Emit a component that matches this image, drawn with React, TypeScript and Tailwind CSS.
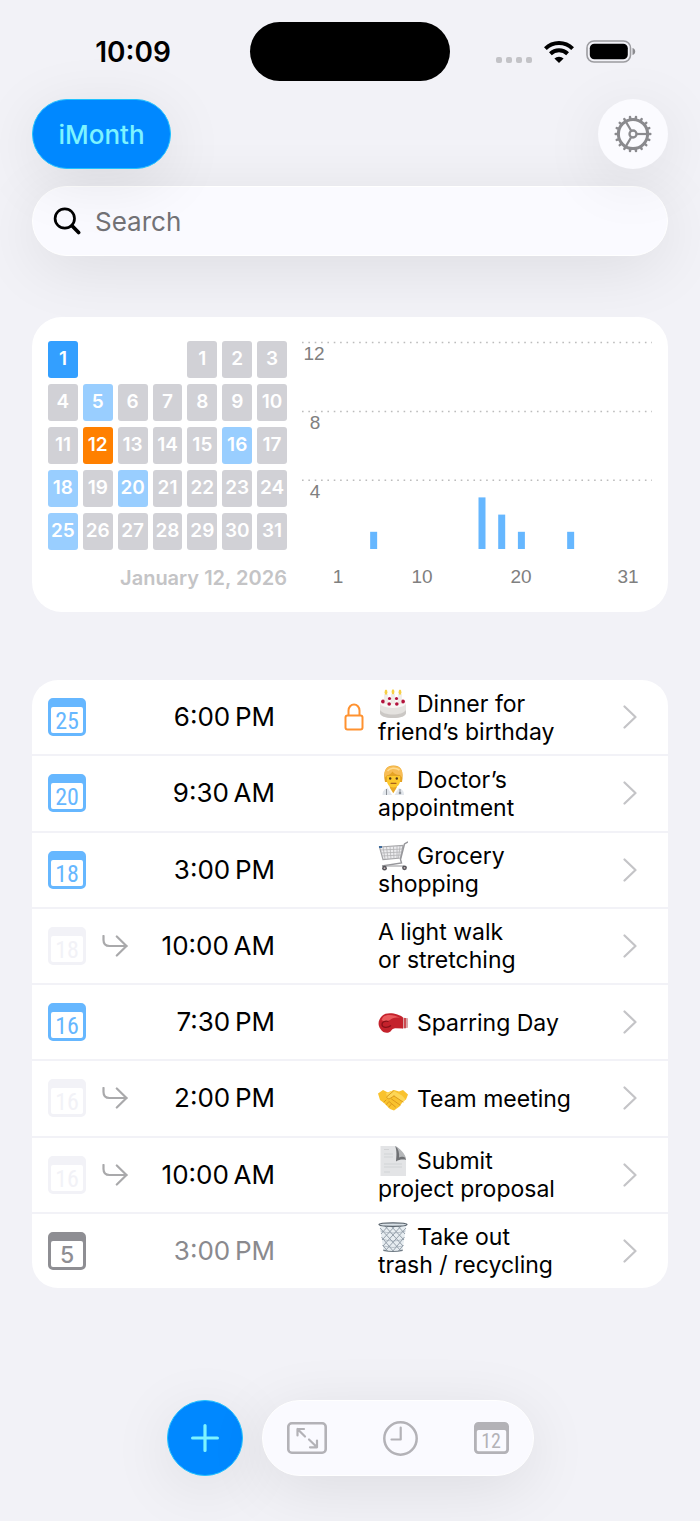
import type { ReactNode } from 'react'

// ============================================================================
// TYPES
// ============================================================================

type EmojiName = 'cake' | 'doctor' | 'cart' | 'glove' | 'handshake' | 'page' | 'basket'

type EventTone = 'upcoming' | 'repeat' | 'past'

interface CalendarEvent {
  id: number
  day: number
  time: string
  tone: EventTone
  lines: string[]
  emoji?: EmojiName
  locked?: boolean
}

// ============================================================================
// DATA
// ============================================================================

const EVENTS: CalendarEvent[] = [
  { id: 1, day: 25, time: '6:00\u202fPM', tone: 'upcoming', emoji: 'cake', lines: ['Dinner for', 'friend’s birthday'], locked: true },
  { id: 2, day: 20, time: '9:30\u202fAM', tone: 'upcoming', emoji: 'doctor', lines: ['Doctor’s', 'appointment'] },
  { id: 3, day: 18, time: '3:00\u202fPM', tone: 'upcoming', emoji: 'cart', lines: ['Grocery', 'shopping'] },
  { id: 4, day: 18, time: '10:00\u202fAM', tone: 'repeat', lines: ['A light walk', 'or stretching'] },
  { id: 5, day: 16, time: '7:30\u202fPM', tone: 'upcoming', emoji: 'glove', lines: ['Sparring Day'] },
  { id: 6, day: 16, time: '2:00\u202fPM', tone: 'repeat', emoji: 'handshake', lines: ['Team meeting'] },
  { id: 7, day: 16, time: '10:00\u202fAM', tone: 'repeat', emoji: 'page', lines: ['Submit', 'project proposal'] },
  { id: 8, day: 5, time: '3:00\u202fPM', tone: 'past', emoji: 'basket', lines: ['Take out', 'trash / recycling'] }
]

const TODAY = 12
const BUSY_DAYS = [5, 16, 18, 20, 25]
const DAYS = Array.from({ length: 31 }, (_, i) => i + 1)

const EVENT_COUNTS = [
  { day: 5, count: 1 },
  { day: 16, count: 3 },
  { day: 18, count: 2 },
  { day: 20, count: 1 },
  { day: 25, count: 1 }
]

// ============================================================================
// ICONS
// ============================================================================

function WifiIcon() {
  return (
    <svg width="30" height="22" viewBox="0 0 30 22" aria-hidden="true">
      <g fill="none" stroke="#000" strokeWidth="4">
        <path d="M1.4 7.6a19.6 19.6 0 0 1 27.2 0" />
        <path d="M6.4 12.8a12.4 12.4 0 0 1 17.2 0" />
      </g>
      <path d="M15 22l-4.6-4.5a6.6 6.6 0 0 1 9.2 0z" />
    </svg>
  )
}

function BatteryIcon() {
  return (
    <svg width="50" height="23" viewBox="0 0 50 23" aria-hidden="true">
      <rect x="1" y="1" width="43.500" height="21" rx="7" fill="none" stroke="#9c9ca0" strokeWidth="1.600" />
      <rect x="3.800" y="3.700" width="38" height="15.600" rx="4.600" fill="#000" />
      <path d="M46.500 8c1.800.4 2.700 1.900 2.700 3.500s-.9 3.100-2.700 3.500z" fill="#8c8c90" />
    </svg>
  )
}

function GearIcon() {
  const teeth = Array.from({ length: 18 }, (_, i) => i * 20)
  return (
    <svg width="38" height="38" viewBox="-19 -19 38 38" fill="none" stroke="#8a8a8e" aria-hidden="true">
      <circle r="14.600" strokeWidth="3" />
      <circle r="3.500" strokeWidth="2.300" />
      {teeth.map(a => (
        <path key={a} d="M15 0H17.300" strokeWidth="2.500" strokeLinecap="round" transform={`rotate(${a})`} />
      ))}
      {[0, 120, 240].map(a => (
        <path key={a} d="M4 0H14" strokeWidth="2.200" transform={`rotate(${a})`} />
      ))}
    </svg>
  )
}

function SearchIcon() {
  return (
    <svg width="28" height="28" viewBox="0 0 28 28" fill="none" stroke="#000" strokeLinecap="round" aria-hidden="true">
      <circle cx="11.800" cy="11.500" r="9.700" strokeWidth="2.700" />
      <path d="M19 18.800L25.600 25.500" strokeWidth="3.700" />
    </svg>
  )
}

function CalendarBadge({ day, className }: { day: number; className: string }) {
  return (
    <svg width="38" height="38" viewBox="0 0 38 38" className={`shrink-0 ${className}`} role="img" aria-label={`Day ${day}`}>
      <path
        fill="currentColor"
        fillRule="evenodd"
        d="M5 0H33a5 5 0 0 1 5 5V33a5 5 0 0 1-5 5H5a5 5 0 0 1-5-5V5a5 5 0 0 1 5-5zM5 9a2 2 0 0 0-2 2V33a2 2 0 0 0 2 2H33a2 2 0 0 0 2-2V11a2 2 0 0 0-2-2z"
      />
      {day < 10 ? (
        <text x="19" y="31" textAnchor="middle" fill="currentColor" className="font-['Inter',sans-serif] text-[23px] font-medium">
          {day}
        </text>
      ) : (
        <text
          x="19"
          y="31"
          textAnchor="middle"
          fill="currentColor"
          className="font-['Roboto_Condensed','Liberation_Sans_Narrow',Roboto,sans-serif] text-[24px] font-normal"
        >
          {day}
        </text>
      )}
    </svg>
  )
}

function RepeatArrowIcon() {
  return (
    <svg width="26" height="22" viewBox="0 0 26 22" fill="none" stroke="#a9a9ab" strokeWidth="2.200" strokeLinecap="round" strokeLinejoin="round" aria-hidden="true">
      <path d="M1.500 1V5Q1.500 11 7.500 11H24.500" />
      <path d="M14.800 1.500L24.500 11L14.800 20.500" />
    </svg>
  )
}

function LockIcon() {
  return (
    <svg width="20" height="28" viewBox="0 0 20 28" fill="none" stroke="#ff9230" strokeWidth="2" role="img" aria-label="Locked">
      <rect x="1.500" y="12.500" width="17" height="14" rx="2" />
      <path d="M4.500 12.500V7.500a5.500 6 0 0 1 11 0V12.500" />
    </svg>
  )
}

function ChevronIcon() {
  return (
    <svg width="14" height="24" viewBox="0 0 14 24" fill="none" stroke="#c4c4c7" strokeWidth="2.200" strokeLinecap="round" strokeLinejoin="round" aria-hidden="true">
      <path d="M1.500 1.500L12.500 12L1.500 22.500" />
    </svg>
  )
}

function PlusIcon() {
  return (
    <svg width="28" height="28" viewBox="0 0 28 28" stroke="#7df3ff" strokeWidth="3.200" strokeLinecap="round" aria-hidden="true">
      <path d="M14 1.600V26.400M1.600 14H26.400" />
    </svg>
  )
}

function ExpandIcon() {
  return (
    <svg width="40" height="32" viewBox="0 0 40 32" fill="none" stroke="#b3b2b7" strokeWidth="2.200" strokeLinecap="round" strokeLinejoin="round" aria-hidden="true">
      <rect x="1.300" y="1.300" width="37.400" height="29.400" rx="3.500" strokeWidth="2.600" />
      <path d="M10.500 13.500V7H17M10.500 7L18 14.500" />
      <path d="M30 18.500V25.300H23M30 25.300L22 17.500" />
    </svg>
  )
}

function ClockIcon() {
  return (
    <svg width="35" height="35" viewBox="0 0 35 35" fill="none" stroke="#b3b2b7" strokeLinecap="round" strokeLinejoin="round" aria-hidden="true">
      <circle cx="17.500" cy="17.500" r="16.200" strokeWidth="2.500" />
      <path d="M17.700 6.500V18.500H8.500" strokeWidth="2.200" />
    </svg>
  )
}

function MonthIcon() {
  return (
    <svg width="35" height="32" viewBox="0 0 35 32" aria-hidden="true">
      <path
        fill="#b3b2b7"
        fillRule="evenodd"
        d="M4.500 0H30.500a4.500 4.500 0 0 1 4.500 4.500V27.500a4.500 4.500 0 0 1-4.500 4.500H4.500A4.500 4.500 0 0 1 0 27.500V4.500A4.500 4.500 0 0 1 4.500 0zM4.600 8a1.800 1.800 0 0 0-1.800 1.800V27.400a1.800 1.800 0 0 0 1.800 1.800H30.400a1.800 1.800 0 0 0 1.800-1.800V9.800A1.800 1.800 0 0 0 30.400 8z"
      />
      <text
        x="17"
        y="26"
        textAnchor="middle"
        fill="#b3b2b7"
        className="font-['Roboto_Condensed','Liberation_Sans_Narrow',Roboto,sans-serif] text-[20px] font-normal"
      >
        12
      </text>
    </svg>
  )
}

// ============================================================================
// EMOJI
// ============================================================================

const EMOJI_ART: Record<EmojiName, ReactNode> = {
  cake: (
    <>
      <path d="M2 14v10c0 3 6 5 13 5s13-2 13-5V14z" fill="#e4e2df" />
      <path d="M2 21v3c0 3 6 5 13 5s13-2 13-5v-3c-2 3-7 4.500-13 4.500S4 24 2 21z" fill="#cbc8c5" />
      <ellipse cx="15" cy="14" rx="13" ry="5" fill="#f8f7f5" />
      <g fill="#b3123c">
        <circle cx="5" cy="12.500" r="1.900" />
        <circle cx="11.500" cy="9.500" r="1.600" />
        <circle cx="18.500" cy="9.500" r="1.600" />
        <circle cx="25" cy="12.500" r="1.900" />
      </g>
      <g stroke="#ddd3cc" strokeWidth="2.800">
        <path d="M8 5v10M15 5v10M22 5v10" />
      </g>
      <g stroke="#f7f2ee" strokeWidth="1.600">
        <path d="M8 5v10M15 5v10M22 5v10" />
      </g>
      <g fill="#f6cf45">
        <ellipse cx="8" cy="3.200" rx="1.400" ry="2.600" />
        <ellipse cx="15" cy="2.800" rx="1.400" ry="2.600" />
        <ellipse cx="22" cy="3.200" rx="1.400" ry="2.600" />
      </g>
      <g fill="#b3123c">
        <circle cx="11.200" cy="15" r="1.800" />
        <circle cx="18.800" cy="15" r="1.800" />
      </g>
    </>
  ),
  doctor: (
    <>
      <path d="M4.500 30c0-5 3-6.500 7-7.500h7.500c4 1 7 2.500 7 7.500z" fill="#e3e7ec" />
      <path d="M11.500 20.500h7.500l-.7 6-3 2.500-3.100-2.500z" fill="#e9a825" />
      <path d="M10.500 22.500l4.700 7.500M20 22.500L15.300 30" stroke="#fff" strokeWidth="2" />
      <path d="M8.500 24v6M22 24v4" stroke="#8b9097" strokeWidth="1" />
      <circle cx="22" cy="28" r="1.300" fill="#8b9097" />
      <path d="M7 17C4.500 6 8 .5 15.500.5S26 6 24 17z" fill="#e5a324" />
      <path d="M8.800 11h13.400v4c0 4.500-3 7.500-6.700 7.500S8.800 19.500 8.800 15z" fill="#fdc92f" />
      <path d="M7 12.500C5.500 4 9 1 15.500 1S25.500 4 24 12.500L22 10c-4 0-6-1.500-7.500-3.500C13 9 11 10 9 10.200z" fill="#f8bd55" />
      <path d="M9.500 6C12 3 17 2 21.500 5" stroke="#ffdc91" strokeWidth="1.600" fill="none" />
      <circle cx="12.200" cy="13.500" r="1.200" fill="#53361b" />
      <circle cx="18.800" cy="13.500" r="1.200" fill="#53361b" />
      <path d="M13 18.300h5" stroke="#a8611b" strokeWidth="1.200" strokeLinecap="round" />
    </>
  ),
  cart: (
    <>
      <path d="M1.500 6L25 4.500L22.500 17L5 18.500z" fill="#ececee" stroke="#a5a5a8" strokeWidth="1.200" />
      <g stroke="#b2b2b5" strokeWidth=".8">
        <path d="M5 6l2 12M8.500 5.700l1.500 12.500M12 5.500l1 12.500M15.500 5.300l.5 12.500M19 5v12.500M22 5l-1.500 12" />
        <path d="M2.500 9L24.500 8M3.500 12L24 11M4 15L23 14" />
      </g>
      <path d="M30 .8L26.500 3l-4 15.500 1 3.500L4 25" fill="none" stroke="#97979b" strokeWidth="1.400" />
      <path d="M8 25h18" stroke="#a5a5a8" strokeWidth="1.200" />
      <rect x="1" y="5" width="3" height="2" fill="#3e6b9c" />
      <g fill="#55555a">
        <circle cx="6.500" cy="27.200" r="2.400" />
        <circle cx="26.500" cy="26.800" r="2.400" />
      </g>
      <g fill="#c9b7ba">
        <circle cx="6.500" cy="27.200" r=".9" />
        <circle cx="26.500" cy="26.800" r=".9" />
      </g>
    </>
  ),
  glove: (
    <>
      <path d="M24 9.500l6 .8v9.500l-6 .8z" fill="#d9a4a6" />
      <path d="M27 10v10.200" stroke="#c9353c" strokeWidth="1.600" />
      <path d="M25 9.500C21 6 9 3 4 8c-4 4-4.500 9-1.500 13 2.500 4 7 5 10 2.500 1.500-1.500 2-3 4.500-3.200L25 20.500z" fill="#c4222c" />
      <path d="M5 9c4-3.500 12-2 17 .7-5-.7-8 .3-10 2.300C9 14 5.500 13.500 3.500 12z" fill="#ea5a5c" />
      <path d="M10.500 13.500c-3.500-1-7 .5-6.500 3.500s6 3 9 .5" fill="none" stroke="#871018" strokeWidth="1.300" />
    </>
  ),
  handshake: (
    <>
      <path d="M0 9.500L5 6l5 2.500L16 6l5 1.500L25 6l5 4.500-2 5-3 2-3.500 5L16 26.500l-4-1.500-6-6-4-3z" fill="#f9c22e" />
      <path d="M8 9l7-2.500 9 5 3.500 4-2.500 2.500-9-6-4 2.500c-2 .8-4-.5-3-2z" fill="#fdd656" />
      <path d="M16 12l9 6M13.500 15l8.500 6M11 17.500l6.500 5.500M15.500 7L9 12.500c-1 1.500 1 2.800 3 2l4-2.500" fill="none" stroke="#dc9a1c" strokeWidth="1" strokeLinecap="round" />
      <path d="M6 18l2-2M8.500 20.500l2-2.500M11 23l2-2.500" stroke="#dc9a1c" strokeWidth="1" strokeLinecap="round" />
    </>
  ),
  page: (
    <>
      <path d="M2.500 0H18L28 12V30H2.500z" fill="#e3e4e6" />
      <path d="M17 0C19 4 18.500 10 18 15.500c3-2 7-2.500 10-1.500C27 8 21 3 17 0z" fill="#6f7174" />
      <path d="M18 0c4 3 8.500 7 10 12-3-1.500-5-1.500-7-.5.5-4-.5-8-3-11.500z" fill="#b5b7b9" />
      <path d="M6 3.500h5M6 8h9M6 11h9M6 18h18M6 21h18M6 26h6" stroke="#d2d3d5" strokeWidth="1.200" />
    </>
  ),
  basket: (
    <>
      <path d="M1.500 2L5.500 28.500Q15 31 24.500 28.500L28.500 2z" fill="#e7edf1" />
      <g fill="none" stroke="#8d99a4" strokeWidth=".9">
        <path d="M2 6l21 23M6 3l19 21M12 3l14 15M19 3l8 9M3.500 15l12 14.500M4.500 23l5 6" />
        <path d="M28 6L7 29M24 3L5 24M18 3L4 18M11 3l-8 9M26.500 15l-12 14.500M25.500 23l-5 6" />
        <path d="M2.500 9q12.500 4 25 0M4 17q11 4 22 0M5 24q10 3 20 0" strokeWidth=".5" />
      </g>
      <path d="M5.300 27.500Q15 30.500 24.700 27.500v1.500Q15 31 5.300 29z" fill="#6f7a84" />
      <ellipse cx="15" cy="2.600" rx="14" ry="1.800" fill="#d8e0e6" stroke="#59636c" strokeWidth="1.200" />
    </>
  )
}

function Emoji({ name }: { name: EmojiName }) {
  return (
    <svg width="30" height="30" viewBox="0 0 30 30" className="shrink-0" role="img" aria-label={name}>
      {EMOJI_ART[name]}
    </svg>
  )
}

// ============================================================================
// SECTIONS
// ============================================================================

function StatusBar() {
  return (
    <div className="grid grid-cols-[1fr_200px_1fr] items-center pt-[22px]">
      <div className="pl-4 text-center text-[28px] leading-8 font-semibold">10:09</div>
      <div className="h-[59px] rounded-full bg-black" />
      <div className="flex items-center justify-center gap-3 pr-[18px]">
        <div className="flex gap-1 self-end">
          {[0, 1, 2, 3].map(i => (
            <span key={i} className="size-1.5 rounded-xs bg-[#c3c3c7]" />
          ))}
        </div>
        <WifiIcon />
        <BatteryIcon />
      </div>
    </div>
  )
}

function dayColor(day: number) {
  if (day === TODAY) return 'bg-[#ff8000]'
  if (BUSY_DAYS.includes(day)) return 'bg-[#99ceff]'
  return 'bg-[#d1d1d6]'
}

function MonthGrid() {
  return (
    <div className="w-[239px] shrink-0">
      <div className="grid grid-cols-7 gap-x-[5px] gap-y-1.5 text-[19px] font-semibold text-white">
        <button type="button" aria-label="Month 1" className="h-[37px] rounded-[3px] bg-[#339fff]">1</button>
        {DAYS.map(day => (
          <button
            key={day}
            type="button"
            className={`h-[37px] rounded-[3px] ${dayColor(day)} ${day === 1 ? 'col-start-5' : ''}`}
          >
            {day}
          </button>
        ))}
      </div>
      <p className="mt-4 text-right text-[20px] leading-6 font-semibold text-[#c4c4c6]">January 12, 2026</p>
    </div>
  )
}

function EventChart() {
  const baseline = 208
  const unit = 17.2
  const dayX = (day: number) => 22.4 + day * 9.85

  return (
    <svg viewBox="0 0 350 250" className="min-w-0 flex-1 self-start" role="img" aria-label="Events per day">
      {[12, 8, 4].map(v => (
        <line
          key={v}
          x1="0"
          x2="350"
          y1={baseline - v * unit}
          y2={baseline - v * unit}
          stroke="#bcbcbc"
          strokeWidth="1.500"
          strokeDasharray="1.600 4.750"
        />
      ))}
      {EVENT_COUNTS.map(({ day, count }) => (
        <rect key={day} x={dayX(day) - 3.5} y={baseline - count * unit} width="7" height={count * unit} fill="#66b7ff" />
      ))}
      <g fill="#808080" textAnchor="middle" className="font-['Liberation_Sans',sans-serif] text-[19px]">
        <text x="12" y="19">12</text>
        <text x="13" y="88">8</text>
        <text x="13" y="157">4</text>
        <text x="36" y="242">1</text>
        <text x="120" y="242">10</text>
        <text x="219" y="242">20</text>
        <text x="326" y="242">31</text>
      </g>
    </svg>
  )
}

const badgeTone: Record<EventTone, string> = {
  upcoming: 'text-[#66b7ff]',
  repeat: 'text-[#f2f2f7]',
  past: 'text-[#8e8e93]'
}

function EventRow({ event }: { event: CalendarEvent }) {
  return (
    <li className="bg-white">
      <a href={`#event-${event.id}`} className="flex h-full items-center pr-[31px] pl-4">
        <CalendarBadge day={event.day} className={badgeTone[event.tone]} />
        <div className="ml-4 w-[26px] shrink-0">{event.tone === 'repeat' && <RepeatArrowIcon />}</div>
        <time className={`w-[147px] shrink-0 text-right text-[26px] leading-8 ${event.tone === 'past' ? 'text-[#8a8a8e]' : 'text-black'}`}>
          {event.time}
        </time>
        <div className="ml-[69px] w-5 shrink-0">{event.locked && <LockIcon />}</div>
        <div className="ml-3.5 min-w-0 flex-1 pt-px text-[23px] leading-7 whitespace-nowrap text-black">
          {event.lines.map((line, i) => (
            <div key={line} className="flex h-7 items-center gap-[9px]">
              {i === 0 && event.emoji && <Emoji name={event.emoji} />}
              <span>{line}</span>
            </div>
          ))}
        </div>
        <ChevronIcon />
      </a>
    </li>
  )
}

function BottomBar() {
  return (
    <nav className="flex items-center justify-center gap-[19px] pt-28 pb-[45px]">
      <button
        type="button"
        aria-label="Add event"
        className="flex size-[76px] items-center justify-center rounded-full border border-[#22c3ff] bg-[#0088ff] shadow-[0_12px_64px_rgba(0,0,0,0.09)]"
      >
        <PlusIcon />
      </button>
      <div className="flex h-[76px] w-[272px] items-center justify-between rounded-full border border-white bg-[#fafaff] px-6 shadow-[0_12px_64px_rgba(0,0,0,0.09)]">
        <button type="button" aria-label="Expand"><ExpandIcon /></button>
        <button type="button" aria-label="Recent"><ClockIcon /></button>
        <button type="button" aria-label="Month view"><MonthIcon /></button>
      </div>
    </nav>
  )
}

// ============================================================================
// APP
// ============================================================================

export default function App() {
  return (
    <div className="min-h-screen overflow-x-hidden bg-[#f2f2f7] font-['Inter',sans-serif]">
      <StatusBar />

      <header className="px-8 pt-[18px]">
        <div className="relative z-10 flex items-center justify-between">
          <button
            type="button"
            className="h-[70px] w-[139px] rounded-full border border-[#22c3ff] bg-[#0088ff] text-[26px] font-medium text-[#7df3ff] shadow-[0_12px_64px_rgba(0,0,0,0.09)]"
          >
            iMonth
          </button>
          <button
            type="button"
            aria-label="Settings"
            className="flex size-[70px] items-center justify-center rounded-full bg-[#fbfbff] shadow-[0_12px_64px_rgba(0,0,0,0.09)]"
          >
            <GearIcon />
          </button>
        </div>

        <label className="mt-[17px] flex h-[70px] items-center gap-3.5 rounded-full border border-white bg-[#fafaff] px-5 shadow-[0_12px_64px_rgba(0,0,0,0.09)]">
          <SearchIcon />
          <input
            type="search"
            placeholder="Search"
            aria-label="Search"
            className="min-w-0 flex-1 bg-transparent text-[26px] text-black outline-none placeholder:text-[#727276]"
          />
        </label>
      </header>

      <main className="px-8">
        {/* Month overview */}
        <section className="mt-[61px] flex gap-[15px] rounded-[30px] bg-white px-4 pt-6 pb-[21px]">
          <MonthGrid />
          <EventChart />
        </section>

        {/* Events */}
        <ul className="mt-[68px] grid min-h-[608px] auto-rows-fr gap-0.5 overflow-hidden rounded-[26px]">
          {EVENTS.map(event => (
            <EventRow key={event.id} event={event} />
          ))}
        </ul>
      </main>

      <BottomBar />
    </div>
  )
}
